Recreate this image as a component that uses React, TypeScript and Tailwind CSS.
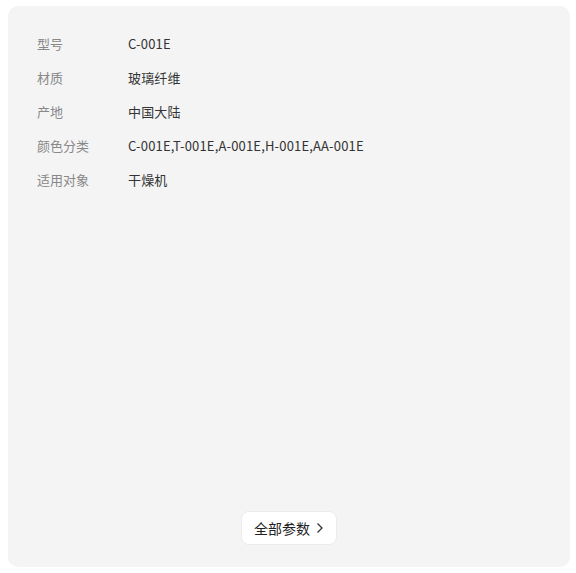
import React from "react";

const rows: [string, string][] = [
  ["型号", "C-001E"],
  ["材质", "玻璃纤维"],
  ["产地", "中国大陆"],
  ["颜色分类", "C-001E,T-001E,A-001E,H-001E,AA-001E"],
  ["适用对象", "干燥机"],
];

export default function App() {
  return (
    <div
      className="w-[576px] h-[573px] bg-white pt-[6px] pl-[8px]"
      style={{ fontFamily: '"Noto Sans CJK SC", "Noto Sans", sans-serif' }}
    >
      <div className="w-[562px] h-[561px] rounded-[10px] bg-[#f4f4f4] flex flex-col pt-[21px] pb-[22px] pl-[29px]">
        <div className="flex flex-col">
          {rows.map(([k, v]) => (
            <div key={k} className="flex items-center h-[34px] text-[13px]">
              <div className="w-[91px] text-[#888888]">{k}</div>
              <div className="text-[#333333] tracking-[0.17px]">{v}</div>
            </div>
          ))}
        </div>
        <div className="flex-1" />
        <div className="flex justify-center pr-[29px]">
          <button className="h-[34px] w-[96px] rounded-[8px] bg-white border border-[#ececec] flex items-center justify-center gap-[5px] text-[14px] text-[#222222]">
            <span>全部参数</span>
            <svg width="9" height="12" viewBox="0 0 9 12" fill="none">
              <path d="M2.5 1.5 L7 6 L2.5 10.5" stroke="#333" strokeWidth="1.3" />
            </svg>
          </button>
        </div>
      </div>
    </div>
  );
}
